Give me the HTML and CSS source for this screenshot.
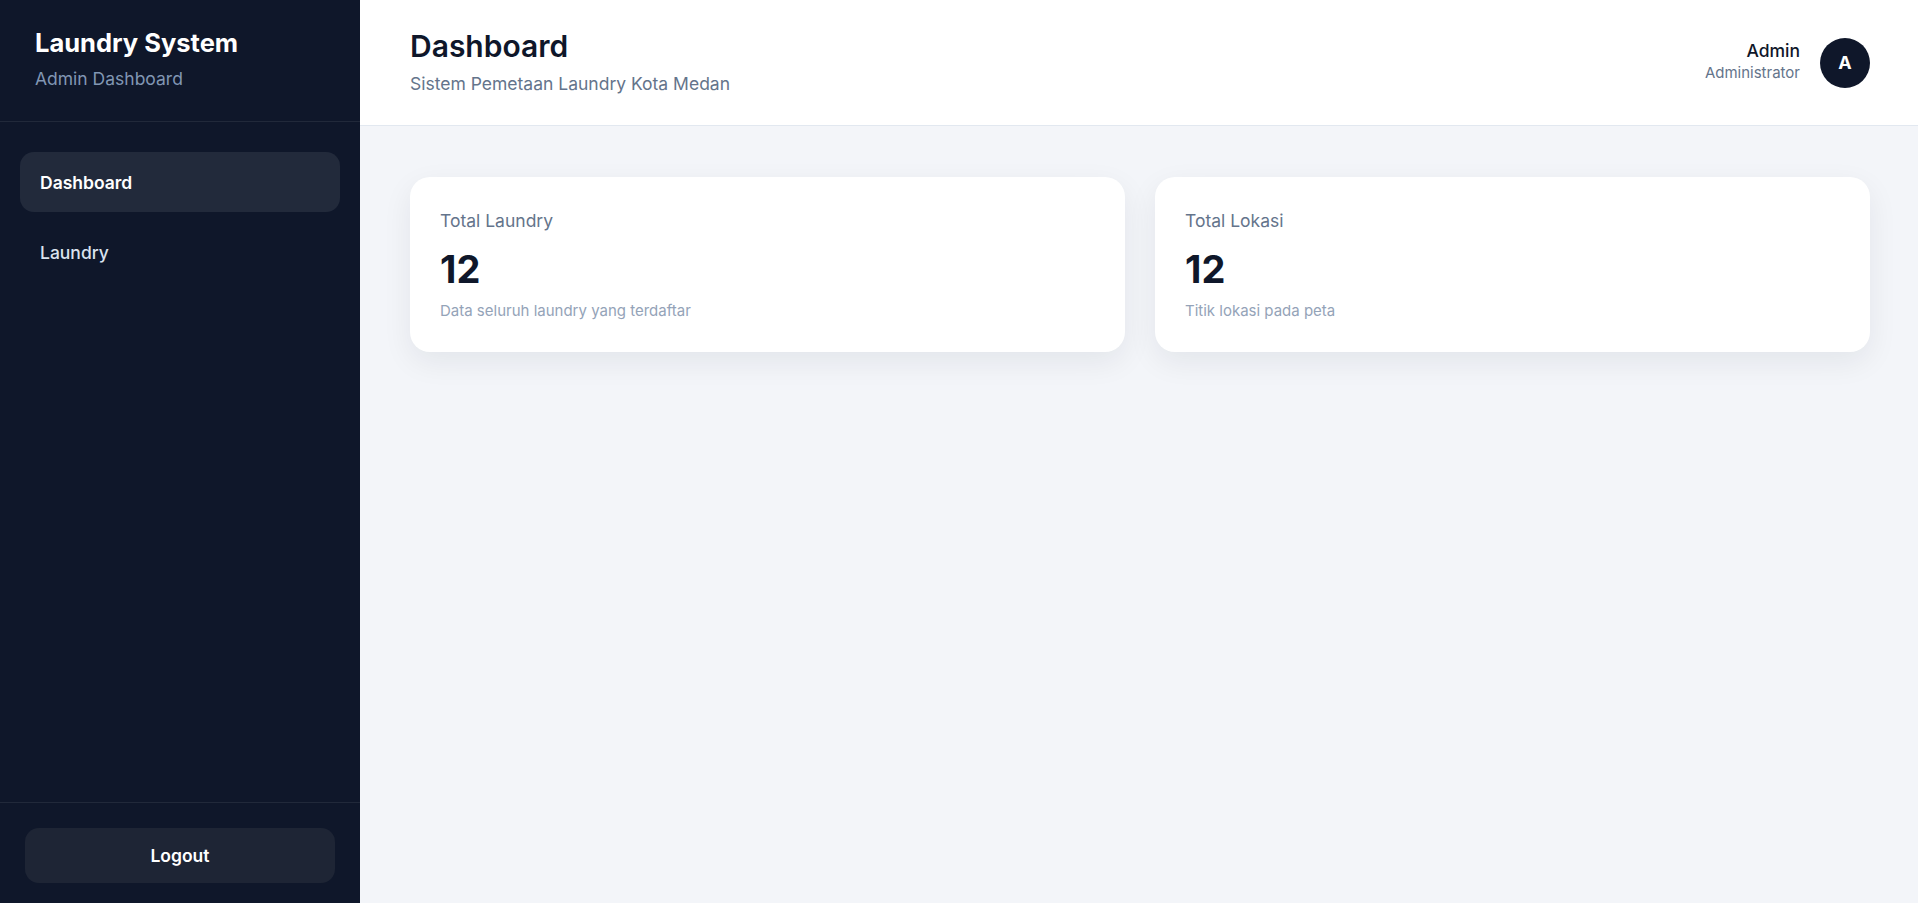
FILE: index.html
```html
<!DOCTYPE html>
<html lang="id">
<head>
  <meta charset="UTF-8">
  <meta name="viewport" content="width=device-width, initial-scale=1.0">
  <title>Admin Dashboard - Laundry System</title>
  <link rel="stylesheet" href="styles.css">
</head>
<body>
  <div class="layout">
    <!-- Sidebar -->
    <aside class="sidebar">
      <div class="sidebar-header">
        <h1>Laundry System</h1>
        <p>Admin Dashboard</p>
      </div>

      <nav class="sidebar-nav">
        <a href="#" class="nav-link active">Dashboard</a>
        <a href="#" class="nav-link">Laundry</a>
      </nav>

      <div class="sidebar-footer">
        <button class="logout-btn">Logout</button>
      </div>
    </aside>

    <!-- Main -->
    <main class="main">
      <header class="topbar">
        <div class="page-title">
          <h2>Dashboard</h2>
          <p>Sistem Pemetaan Laundry Kota Medan</p>
        </div>
        <div class="user">
          <div class="user-info">
            <span class="user-name">Admin</span>
            <span class="user-role">Administrator</span>
          </div>
          <div class="avatar">A</div>
        </div>
      </header>

      <section class="content">
        <div class="stats">
          <div class="stat-card">
            <h3>Total Laundry</h3>
            <div class="stat-value">12</div>
            <p>Data seluruh laundry yang terdaftar</p>
          </div>
          <div class="stat-card">
            <h3>Total Lokasi</h3>
            <div class="stat-value">12</div>
            <p>Titik lokasi pada peta</p>
          </div>
        </div>
      </section>
    </main>
  </div>
</body>
</html>
```

FILE: styles.css
```css
* {
  box-sizing: border-box;
}

body {
  margin: 0;
  font-family: Inter, "Noto Sans", Arial, sans-serif;
  background: #f3f5f9;
  color: #0f172a;
}

.layout {
  display: flex;
  min-height: 100vh;
}

/* Sidebar */
.sidebar {
  width: 360px;
  flex-shrink: 0;
  background: #0f172a;
  color: #fff;
  display: flex;
  flex-direction: column;
  height: 100vh;
}

.sidebar-header {
  padding: 28px 35px 0;
  border-bottom: 1px solid rgba(255, 255, 255, 0.08);
  height: 122px;
}

.sidebar-header h1 {
  margin: 0;
  font-size: 25.5px;
  font-weight: 700;
  line-height: 1.2;
}

.sidebar-header p {
  margin: 9px 0 0;
  font-size: 17.5px;
  color: #8196b3;
}

.sidebar-nav {
  flex: 1;
  padding: 30px 20px;
  display: flex;
  flex-direction: column;
  gap: 10px;
}

.nav-link {
  display: flex;
  align-items: center;
  height: 60px;
  padding: 0 20px;
  border-radius: 14px;
  color: #dbe3ee;
  text-decoration: none;
  font-size: 17.5px;
  font-weight: 500;
}

.nav-link.active {
  background: #222a3b;
  color: #fff;
  font-weight: 600;
}

.sidebar-footer {
  padding: 25px 25px 20px;
  border-top: 1px solid rgba(255, 255, 255, 0.08);
}

.logout-btn {
  width: 100%;
  height: 55px;
  border: none;
  border-radius: 14px;
  background: #1e2535;
  color: #fff;
  font-family: inherit;
  font-size: 17.5px;
  font-weight: 600;
  cursor: pointer;
}

/* Main */
.main {
  flex: 1;
  display: flex;
  flex-direction: column;
}

.topbar {
  height: 126px;
  background: #fff;
  border-bottom: 1px solid #e2e8f0;
  padding: 0 48px 0 50px;
  display: flex;
  align-items: center;
  justify-content: space-between;
}

.page-title {
  padding-bottom: 4px;
}

.page-title h2 {
  margin: 0;
  font-size: 30px;
  font-weight: 600;
  line-height: 1.2;
}

.page-title p {
  margin: 9px 0 0;
  font-size: 17.5px;
  color: #64748b;
}

.user {
  display: flex;
  align-items: center;
  gap: 20px;
}

.user-info {
  display: flex;
  flex-direction: column;
  align-items: flex-end;
  gap: 2px;
  padding-bottom: 3px;
}

.user-name {
  font-size: 17.5px;
  font-weight: 500;
}

.user-role {
  font-size: 15px;
  color: #64748b;
}

.avatar {
  width: 50px;
  height: 50px;
  border-radius: 50%;
  background: #0f172a;
  color: #fff;
  display: flex;
  align-items: center;
  justify-content: center;
  font-size: 18px;
  font-weight: 700;
}

.content {
  padding: 51px 48px 50px 50px;
}

.stats {
  display: grid;
  grid-template-columns: 1fr 1fr;
  gap: 30px;
}

.stat-card {
  background: #fff;
  border-radius: 20px;
  padding: 33px 30px 0;
  height: 175px;
  box-shadow: 0 10px 30px rgba(15, 23, 42, 0.07);
}

.stat-card h3 {
  margin: 0;
  font-size: 17.5px;
  font-weight: 400;
  color: #64748b;
}

.stat-value {
  margin-top: 16px;
  font-size: 38px;
  font-weight: 700;
  line-height: 1.2;
}

.stat-card p {
  margin: 8px 0 0;
  font-size: 15px;
  color: #94a3b8;
}
```
